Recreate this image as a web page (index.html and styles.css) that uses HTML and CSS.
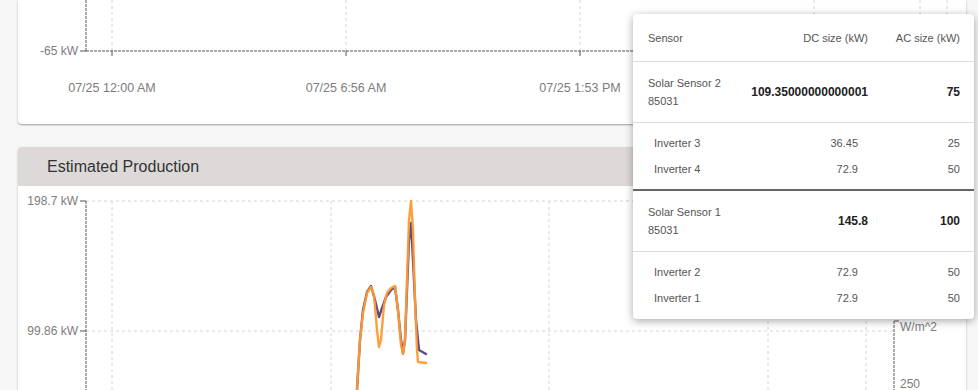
FILE: index.html
```html
<!DOCTYPE html>
<html lang="en">
<head>
  <meta charset="UTF-8">
  <title>Production</title>
  <link rel="stylesheet" href="styles.css">
</head>
<body>
  <div class="page">
    <!-- power chart (scrolled, top cut off) -->
    <div class="card card-top">
      <svg class="chart" width="948" height="124" viewBox="0 0 948 124">
        <g class="grid">
          <line x1="94" y1="0" x2="94" y2="51"/>
          <line x1="328" y1="0" x2="328" y2="51"/>
          <line x1="562" y1="0" x2="562" y2="51"/>
          <line x1="796" y1="0" x2="796" y2="51"/>
          <line x1="902" y1="0" x2="902" y2="51"/>
          <line x1="929" y1="0" x2="929" y2="51"/>
        </g>
        <g class="axis">
          <line x1="68" y1="0" x2="68" y2="51"/>
          <line x1="68" y1="51" x2="900" y2="51"/>
        </g>
        <g class="tick">
          <line x1="62" y1="51" x2="68" y2="51"/>
          <line x1="94" y1="51" x2="94" y2="56"/>
          <line x1="328" y1="51" x2="328" y2="56"/>
          <line x1="562" y1="51" x2="562" y2="56"/>
        </g>
        <text class="ylabel" x="60" y="55">-65 kW</text>
        <text class="xlabel" x="94" y="92">07/25 12:00 AM</text>
        <text class="xlabel" x="328" y="92">07/25 6:56 AM</text>
        <text class="xlabel" x="562" y="92">07/25 1:53 PM</text>
      </svg>
    </div>

    <!-- estimated production -->
    <div class="card">
      <div class="card-header">Estimated Production</div>
      <svg class="chart" width="948" height="220" viewBox="0 0 948 220">
        <g class="grid">
          <line x1="68" y1="15" x2="876" y2="15"/>
          <line x1="68" y1="145" x2="876" y2="145"/>
          <line x1="94" y1="15" x2="94" y2="220"/>
          <line x1="313" y1="15" x2="313" y2="220"/>
          <line x1="531" y1="15" x2="531" y2="220"/>
          <line x1="750" y1="15" x2="750" y2="220"/>
          <line x1="848" y1="15" x2="848" y2="220"/>
        </g>
        <g class="axis">
          <line x1="68" y1="15" x2="68" y2="220"/>
          <line x1="876" y1="135" x2="876" y2="220"/>
        </g>
        <g class="tick">
          <line x1="62" y1="15" x2="68" y2="15"/>
          <line x1="62" y1="145" x2="68" y2="145"/>
          <line x1="876" y1="135" x2="881" y2="135"/>
        </g>
        <text class="ylabel" x="60" y="19">198.7 kW</text>
        <text class="ylabel" x="60" y="149">99.86 kW</text>
        <text class="rlabel" x="882" y="145">W/m^2</text>
        <text class="rlabel" x="882" y="202">250</text>
        <polyline class="series purple" points="339,204 342,154 345,124 349,106 353,100 357,114 361,131 364,122 368,111 373,104 377,101 380,124 383,154 385,167 387,154 389,104 391,54 393,37 395,74 398,134 401,164 408,168"/>
        <polyline class="series orange" points="339,204 342,154 345,127 349,107 353,101 356,109 359,144 361,161 363,154 366,119 369,107 373,102 377,100 380,124 383,159 385,168 387,154 389,94 391,34 393,15 395,44 397,114 399,164 400,176 408,177"/>
      </svg>
    </div>
  </div>

  <!-- sensor size popup -->
  <div class="popup">
    <div class="row head">
      <span>Sensor</span>
      <span class="num">DC size (kW)</span>
      <span class="num">AC size (kW)</span>
    </div>

    <div class="row sensor">
      <span>Solar Sensor 2<br>85031</span>
      <span class="num bold">109.35000000000001</span>
      <span class="num bold">75</span>
    </div>
    <div class="group">
      <div class="row inverter">
        <span>Inverter 3</span>
        <span class="num">36.45</span>
        <span class="num">25</span>
      </div>
      <div class="row inverter">
        <span>Inverter 4</span>
        <span class="num">72.9</span>
        <span class="num">50</span>
      </div>
    </div>

    <div class="row sensor">
      <span>Solar Sensor 1<br>85031</span>
      <span class="num bold">145.8</span>
      <span class="num bold">100</span>
    </div>
    <div class="group last">
      <div class="row inverter">
        <span>Inverter 2</span>
        <span class="num dc-alt">72.9</span>
        <span class="num">50</span>
      </div>
      <div class="row inverter">
        <span>Inverter 1</span>
        <span class="num dc-alt">72.9</span>
        <span class="num">50</span>
      </div>
    </div>
  </div>
</body>
</html>
```

FILE: styles.css
```css
/* page */
body {
  margin: 0;
  background-color: #f7f7f7;
  font-family: "Liberation Sans", Arial, sans-serif;
  color: #333;
  overflow: hidden;
}
.page {
  width: 948px;
  padding: 0 12px 0 18px;
  display: flex;
  flex-direction: column;
  gap: 23px;
}

/* cards */
.card {
  background-color: #fff;
  border-radius: 4px;
  box-shadow: 0 1px 2px rgba(0,0,0,0.35);
  overflow: hidden;
}
.card-top {
  border-radius: 0 0 4px 4px;
}
.card-header {
  height: 39px;
  line-height: 39px;
  padding-left: 29px;
  background-color: #dcd9d8;
  font-size: 16px;
  color: #333;
}
.chart {
  display: block;
}
.chart text {
  font-family: "Liberation Sans", Arial, sans-serif;
  fill: #7c7c7c;
}
.ylabel {
  font-size: 12px;
  text-anchor: end;
}
.rlabel {
  font-size: 12px;
}
.xlabel {
  font-size: 12.5px;
  text-anchor: middle;
}
.grid line {
  stroke: #d4d4d4;
  stroke-width: 1;
  stroke-dasharray: 3 3;
}
.axis line {
  stroke: #555;
  stroke-width: 1;
  stroke-dasharray: 3 1;
}
.tick line {
  stroke: #555;
  stroke-width: 1;
}
.series {
  fill: none;
  stroke-width: 2.4;
  stroke-linejoin: round;
  stroke-linecap: round;
}
.purple {
  stroke: #5c4a8c;
}
.orange {
  stroke: #ff9a30;
  opacity: 0.95;
}

/* popup table */
.popup {
  position: absolute;
  left: 633px;
  top: 14px;
  width: 341px;
  background-color: #fff;
  border-radius: 4px;
  box-shadow: 0 2px 8px rgba(0,0,0,0.35);
  font-size: 11px;
  color: #555;
}
.row {
  display: grid;
  grid-template-columns: 1fr 130px 92px;
  align-items: center;
  padding: 0 14px 0 15px;
}
.row .num {
  text-align: right;
}
.head {
  height: 47px;
  border-bottom: 1px solid #ddd;
}
.sensor {
  height: 60px;
  line-height: 18px;
  border-bottom: 1px solid #ddd;
}
.bold {
  font-size: 12px;
  font-weight: bold;
  color: #222;
}
.group {
  padding: 7px 0 7px;
  border-bottom: 2px solid #666;
}
.group.last {
  border-bottom: none;
  padding-bottom: 8px;
}
.inverter {
  height: 26px;
  padding-left: 21px;
}
.inverter .num:nth-child(2) {
  padding-right: 10px;
}
.inverter .dc-alt {
  padding-right: 14px;
}
```
